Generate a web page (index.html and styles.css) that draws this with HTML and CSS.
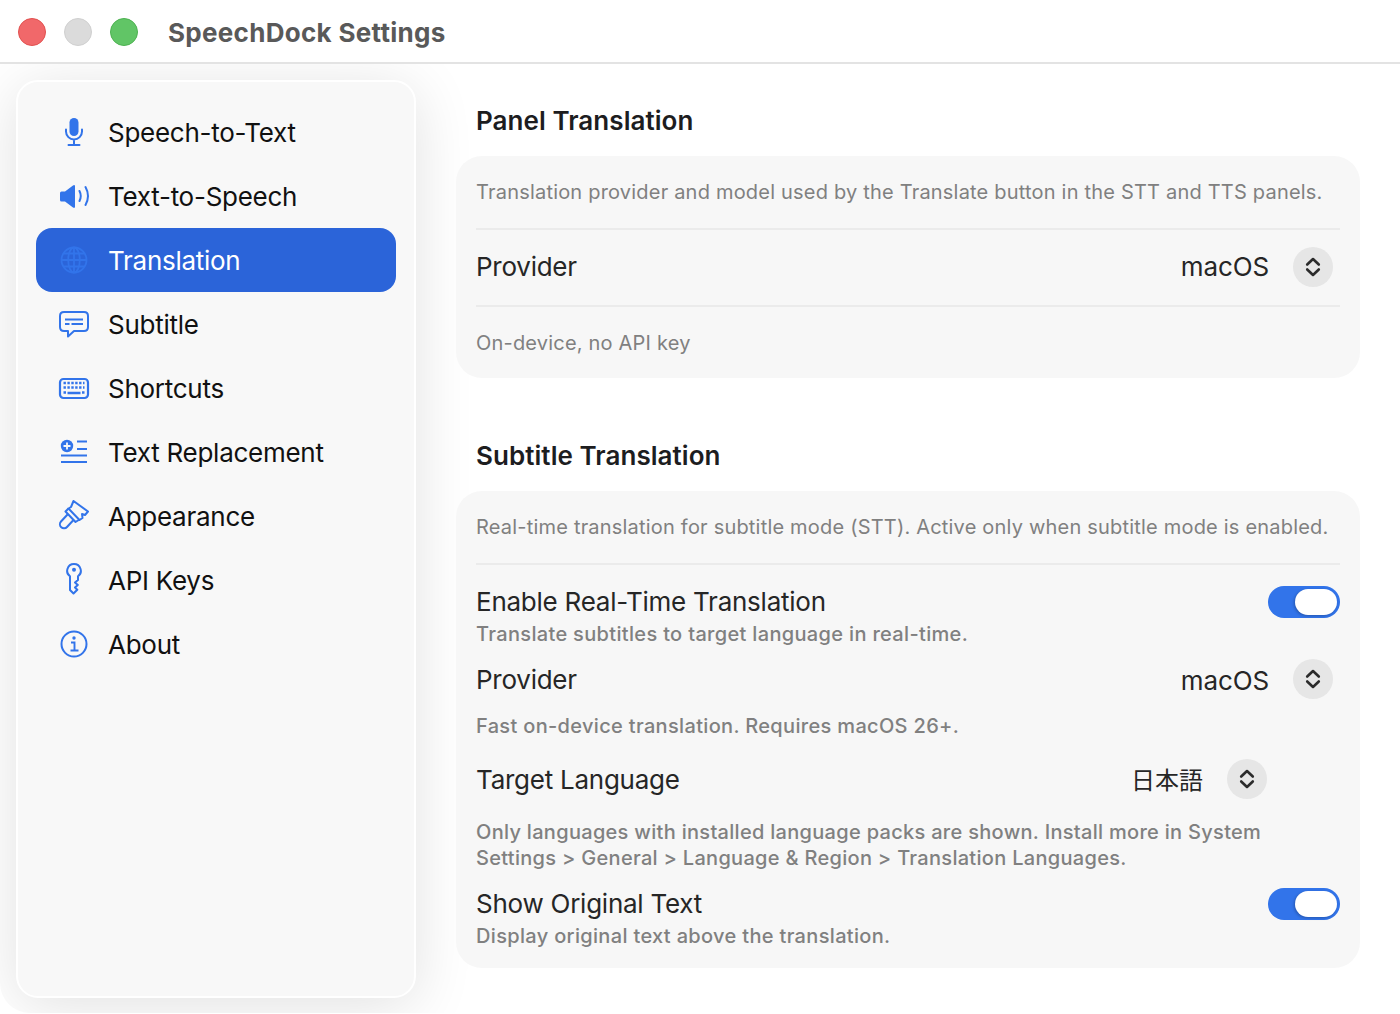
FILE: index.html
```html
<!DOCTYPE html>
<html lang="en">
<head>
    <meta charset="UTF-8">
    <meta name="viewport" content="width=device-width, initial-scale=1.0">
    <title>SpeechDock Settings</title>
    <link rel="stylesheet" href="styles.css">
</head>
<body>
    <div class="window">
        <header class="titlebar">
            <div class="lights">
                <span class="light light-close"></span>
                <span class="light light-min"></span>
                <span class="light light-max"></span>
            </div>
            <h1 class="window-title">SpeechDock Settings</h1>
        </header>

        <div class="content">
            <nav class="sidebar">
                <a class="nav-item">
                    <span class="nav-icon">
                        <svg width="34" height="34" viewBox="0 0 34 34"><rect x="12.5" y="3" width="9" height="18" rx="4.5" fill="currentColor"/><path d="M9 14.5v2a8 8 0 0 0 16 0v-2M17 24.5v5M11.5 30h11" fill="none" stroke="currentColor" stroke-width="2" stroke-linecap="round"/></svg>
                    </span>
                    <span>Speech-to-Text</span>
                </a>
                <a class="nav-item">
                    <span class="nav-icon">
                        <svg width="34" height="34" viewBox="0 0 34 34"><path d="M4.5 12.500h3.500l8-6q2-1.200 2 1v20q0 2.200-2 1l-8-6H4.500q-1.500 0-1.500-1.500v-7q0-1.500 1.500-1.500z" fill="currentColor"/><path d="M22.500 12q2.500 5 0 10M28.500 8q5 9 0 18" fill="none" stroke="currentColor" stroke-width="2" stroke-linecap="round"/></svg>
                    </span>
                    <span>Text-to-Speech</span>
                </a>
                <a class="nav-item active">
                    <span class="nav-icon">
                        <svg width="34" height="34" viewBox="0 0 34 34" fill="none" stroke="currentColor" stroke-width="1.800"><circle cx="17" cy="17" r="12.500"/><ellipse cx="17" cy="17" rx="5.800" ry="12.500"/><path d="M17 4.500v25M4.500 17h25M6.500 10.500h21M6.500 23.500h21"/></svg>
                    </span>
                    <span>Translation</span>
                </a>
                <a class="nav-item">
                    <span class="nav-icon">
                        <svg width="34" height="34" viewBox="0 0 34 34" fill="none" stroke="currentColor" stroke-width="2"><path d="M7 5h20q4 0 4 4v11q0 4-4 4H17l-6 5.500V24H7q-4 0-4-4V9q0-4 4-4z" stroke-linejoin="round"/><path d="M8 12.500h18M8 17h4.500M14.500 17H26" stroke-width="1.800"/></svg>
                    </span>
                    <span>Subtitle</span>
                </a>
                <a class="nav-item">
                    <span class="nav-icon">
                        <svg width="34" height="34" viewBox="0 0 34 34" fill="none" stroke="currentColor"><rect x="3" y="8" width="28" height="19" rx="3.500" stroke-width="2.200"/><path d="M6.500 12h21M6.500 16.500h21" stroke-width="2.400" stroke-dasharray="2.400 1.500"/><path d="M6.500 21.500h2.500M25 21.500h2.500M10.500 22h13" stroke-width="2.400"/></svg>
                    </span>
                    <span>Shortcuts</span>
                </a>
                <a class="nav-item">
                    <span class="nav-icon">
                        <svg width="34" height="34" viewBox="0 0 34 34"><circle cx="10" cy="11" r="6.200" fill="currentColor"/><path d="M6.500 11h7M10 7.500v7" stroke="#f8f8f8" stroke-width="1.800"/><path d="M20 6.500h10M20 14h10M4 20.500h26M4 27h26" stroke="currentColor" stroke-width="2"/></svg>
                    </span>
                    <span>Text Replacement</span>
                </a>
                <a class="nav-item">
                    <span class="nav-icon">
                        <svg width="34" height="34" viewBox="0 0 34 34" fill="none" stroke="currentColor" stroke-width="2" stroke-linejoin="round"><path d="M16.500 2L31 12.500 28 16 25 15 25.500 19 22.500 21 11.500 9.500 14 8z"/><path d="M11.500 9.500L8.500 12.500 18.500 23 22.500 20.500"/><path d="M11 15L4 22.500a4 4 0 1 0 6 5.500L16.500 21"/></svg>
                    </span>
                    <span>Appearance</span>
                </a>
                <a class="nav-item">
                    <span class="nav-icon">
                        <svg width="34" height="34" viewBox="0 0 34 34" fill="none" stroke="currentColor" stroke-width="2" stroke-linejoin="round"><path d="M17 1a6.800 6.800 0 0 0-4 12.300V27l3.500 3.500 3.800-3.800-2.300-2.200 2.800-2.500-2.800-2.500 3-2.500V13.300A6.800 6.800 0 0 0 17 1z"/><circle cx="17" cy="6.700" r="2" fill="currentColor" stroke="none"/></svg>
                    </span>
                    <span>API Keys</span>
                </a>
                <a class="nav-item">
                    <span class="nav-icon">
                        <svg width="34" height="34" viewBox="0 0 34 34" fill="none" stroke="currentColor" stroke-width="2"><circle cx="17" cy="17" r="12.500"/><circle cx="17" cy="11" r="1.700" fill="currentColor" stroke="none"/><path d="M14 15.500h3.500v8M13.500 23.500h8" stroke-width="1.900"/></svg>
                    </span>
                    <span>About</span>
                </a>
            </nav>

            <main class="main">
                <section class="group">
                    <h2 class="group-title">Panel Translation</h2>
                    <div class="panel panel-first">
                        <p class="hint hint-top">Translation provider and model used by the Translate button in the STT and TTS panels.</p>
                        <div class="row row-provider">
                            <span class="label">Provider</span>
                            <div class="picker">
                                <span class="picker-value">macOS</span>
                                <span class="stepper"><svg width="16" height="22" viewBox="0 0 16 22" fill="none" stroke="currentColor" stroke-width="2.600" stroke-linecap="round" stroke-linejoin="round"><path d="M2.200 8.500L8 3l5.800 5.500M2.200 13.500L8 19l5.800-5.500"/></svg></span>
                            </div>
                        </div>
                        <p class="hint hint-bottom">On-device, no API key</p>
                    </div>
                </section>

                <section class="group group-second">
                    <h2 class="group-title">Subtitle Translation</h2>
                    <div class="panel">
                        <p class="hint hint-top">Real-time translation for subtitle mode (STT). Active only when subtitle mode is enabled.</p>
                        <div class="toggle-row toggle-row-first">
                            <div>
                                <div class="label">Enable Real-Time Translation</div>
                                <div class="hint hint-strong">Translate subtitles to target language in real-time.</div>
                            </div>
                            <span class="toggle"><span class="knob"></span></span>
                        </div>
                        <div class="row row-plain">
                            <span class="label">Provider</span>
                            <div class="picker">
                                <span class="picker-value">macOS</span>
                                <span class="stepper"><svg width="16" height="22" viewBox="0 0 16 22" fill="none" stroke="currentColor" stroke-width="2.600" stroke-linecap="round" stroke-linejoin="round"><path d="M2.200 8.500L8 3l5.800 5.500M2.200 13.500L8 19l5.800-5.500"/></svg></span>
                            </div>
                        </div>
                        <p class="hint hint-strong hint-fast">Fast on-device translation. Requires macOS 26+.</p>
                        <div class="row row-plain row-target">
                            <span class="label">Target Language</span>
                            <div class="picker picker-cjk">
                                <span class="picker-value">日本語</span>
                                <span class="stepper"><svg width="16" height="22" viewBox="0 0 16 22" fill="none" stroke="currentColor" stroke-width="2.600" stroke-linecap="round" stroke-linejoin="round"><path d="M2.200 8.500L8 3l5.800 5.500M2.200 13.500L8 19l5.800-5.500"/></svg></span>
                            </div>
                        </div>
                        <p class="hint hint-strong hint-wrap">Only languages with installed language packs are shown. Install more in System Settings &gt; General &gt; Language &amp; Region &gt; Translation Languages.</p>
                        <div class="toggle-row">
                            <div>
                                <div class="label">Show Original Text</div>
                                <div class="hint hint-strong">Display original text above the translation.</div>
                            </div>
                            <span class="toggle"><span class="knob"></span></span>
                        </div>
                    </div>
                </section>
            </main>
        </div>
    </div>
</body>
</html>
```

FILE: styles.css
```css
* {
    box-sizing: border-box;
}
html, body {
    margin: 0;
    height: 100%;
    background-color: #ffffff;
}
body {
    font-family: Inter, "Noto Sans CJK JP", sans-serif;
    color: #1d1d1f;
    overflow: hidden;
}
.window {
    height: 1013px;
    display: flex;
    flex-direction: column;
}

/* Title bar */
.titlebar {
    height: 64px;
    flex: none;
    display: flex;
    align-items: center;
    padding: 2px 0 0 18px;
    border-bottom: 2px solid #e3e3e3;
}
.lights {
    display: flex;
    gap: 18px;
}
.light {
    width: 28px;
    height: 28px;
    border-radius: 50%;
    border: 1px solid transparent;
}
.light-close {
    background-color: #f1686a;
    border-color: #e2514f;
}
.light-min {
    background-color: #dbdbdb;
    border-color: #d0d0d0;
}
.light-max {
    background-color: #61c566;
    border-color: #4db251;
}
.window-title {
    margin: 0 0 0 30px;
    font-size: 26px;
    font-weight: 700;
    letter-spacing: 0.3px;
    color: #595959;
}

/* Layout */
.content {
    flex: 1;
    display: flex;
    overflow: hidden;
    padding: 16px 40px 15px 16px;
    border-bottom-left-radius: 30px;
}
.sidebar {
    width: 400px;
    flex: none;
    padding: 18px;
    background-color: #f8f8f8;
    border: 2px solid #ffffff;
    border-radius: 22px;
    box-shadow: 0 8px 60px rgba(0, 0, 0, 0.12);
}
.nav-item {
    height: 64px;
    display: flex;
    align-items: center;
    padding-left: 21px;
    gap: 17px;
    border-radius: 16px;
    font-size: 26px;
    letter-spacing: -0.27px;
    color: #111111;
}
.nav-item.active {
    background-color: #2b64d9;
    color: #ffffff;
}
.nav-icon {
    width: 34px;
    height: 34px;
    flex: none;
    color: #3274ea;
}
.nav-icon svg {
    display: block;
}

/* Main column */
.main {
    flex: 1;
    padding-left: 40px;
}
.group-title {
    margin: 0;
    height: 76px;
    padding: 24px 0 0 20px;
    font-size: 26px;
    font-weight: 600;
    letter-spacing: 0.06px;
    line-height: 34px;
    color: #1d1d1f;
}
.group-second {
    margin-top: 37px;
}
.panel {
    padding: 0 20px;
    background-color: #f7f7f7;
    border-radius: 26px;
}
.panel-first {
    height: 222px;
}
.group:last-child .panel {
    height: 477px;
}
.label {
    font-size: 26px;
    letter-spacing: -0.25px;
    line-height: 34px;
    color: #262626;
}
.hint {
    margin: 0;
    font-size: 20px;
    letter-spacing: 0.2px;
    line-height: 26px;
    color: #808080;
}
.hint-strong {
    font-weight: 500;
    letter-spacing: 0.33px;
}
.hint-top {
    height: 74px;
    padding-top: 23px;
    border-bottom: 2px solid #ebebeb;
}
.row {
    display: flex;
    align-items: center;
    justify-content: space-between;
}
.row-provider {
    height: 77px;
    padding-bottom: 2px;
    border-bottom: 2px solid #ebebeb;
}
.hint-bottom {
    padding-top: 23px;
}
.picker {
    display: flex;
    align-items: center;
    gap: 24px;
    padding-right: 7px;
}
.picker-cjk {
    padding-right: 73px;
}
.picker-value {
    font-size: 26px;
    letter-spacing: -0.1px;
    color: #262626;
}
.picker-cjk .picker-value {
    font-size: 24px;
    letter-spacing: 0;
    margin-bottom: 4px;
}
.stepper {
    width: 40px;
    height: 40px;
    display: flex;
    align-items: center;
    justify-content: center;
    border-radius: 50%;
    background-color: #e6e6e6;
    color: #2b2b2b;
}
.row-plain .stepper {
    margin-bottom: 2px;
}
.toggle-row {
    display: flex;
    justify-content: space-between;
    align-items: flex-start;
}
.toggle-row-first {
    padding-top: 20px;
}
.toggle-row .hint {
    margin-top: 2px;
}
.toggle {
    width: 72px;
    height: 32px;
    margin-top: 1px;
    padding: 3px;
    display: flex;
    justify-content: flex-end;
    border-radius: 16px;
    background-color: #3274ea;
}
.knob {
    width: 42px;
    height: 26px;
    border-radius: 13px;
    background-color: #ffffff;
    box-shadow: -1px 1px 3px rgba(0, 0, 0, 0.25);
}
.row-plain {
    height: 46px;
    margin-top: 10px;
}
.hint-fast {
    margin-top: 10px;
}
.row-target {
    margin-top: 18px;
}
.hint-wrap {
    margin-top: 16px;
    padding-right: 70px;
    letter-spacing: 0.3px;
}
.hint-wrap + .toggle-row {
    margin-top: 16px;
}
```
